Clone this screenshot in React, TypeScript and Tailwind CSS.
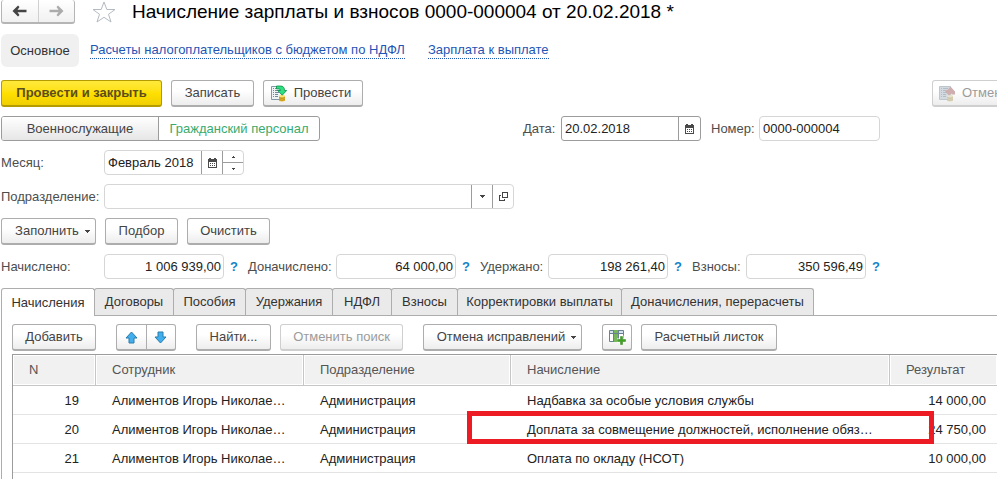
import { useState } from "react";
import type { ReactNode } from "react";
import clsx from "clsx";

const totals = [
  { id: "accrued", label: "Начислено:", value: "1 006 939,00", labelClass: "w-[103px]" },
  { id: "extra", label: "Доначислено:", value: "64 000,00", labelClass: "w-[88px]" },
  { id: "withheld", label: "Удержано:", value: "198 261,40", labelClass: "w-[68px]" },
  { id: "fees", label: "Взносы:", value: "350 596,49", labelClass: "w-[54px]" },
];

const tabs = [
  { label: "Начисления", width: "w-[94px]" },
  { label: "Договоры", width: "w-[80px]" },
  { label: "Пособия", width: "w-[73px]" },
  { label: "Удержания", width: "w-[88px]" },
  { label: "НДФЛ", width: "w-[60px]" },
  { label: "Взносы", width: "w-[67px]" },
  { label: "Корректировки выплаты", width: "w-[165px]" },
  { label: "Доначисления, перерасчеты", width: "w-[193px]" },
];

const rows = [
  { n: 19, employee: "Алиментов Игорь Николае…", dept: "Администрация", accrual: "Надбавка за особые условия службы", result: "14 000,00" },
  { n: 20, employee: "Алиментов Игорь Николае…", dept: "Администрация", accrual: "Доплата за совмещение должностей, исполнение обяз…", result: "24 750,00", marked: true },
  { n: 21, employee: "Алиментов Игорь Николае…", dept: "Администрация", accrual: "Оплата по окладу (НСОТ)", result: "10 000,00" },
];

type ButtonProps = {
  children: ReactNode;
  className?: string;
  primary?: boolean;
  disabled?: boolean;
  label?: string;
};

function Button({ children, className, primary, disabled, label }: ButtonProps) {
  return (
    <button
      type="button"
      disabled={disabled}
      aria-label={label}
      className={clsx(
        "flex h-[27px] shrink-0 items-center justify-center whitespace-nowrap rounded-[3px] border border-b-2",
        primary
          ? "border-[#b39b00] bg-linear-to-b from-[#ffea3a] via-[#ffe000] to-[#f0cf00] font-bold text-[#5c4d1c]"
          : "bg-linear-to-b from-white from-40% to-[#ededed]",
        !primary && (disabled ? "border-[#cfcfcf] text-[#9b9b9b]" : "border-[#adadad] text-[#444]"),
        className
      )}
    >
      {children}
    </button>
  );
}

function NavArrow({ flip }: { flip?: boolean }) {
  return (
    <svg width="15" height="12" viewBox="0 0 15 12" className={flip ? "-scale-x-100 text-[#ababab]" : "text-[#444]"}>
      <path d="M0.500 6L6 0.500L7.500 2L5.500 4.700H14.500V7.300H5.500L7.500 10L6 11.500Z" fill="currentColor" />
    </svg>
  );
}

function CalendarIcon() {
  return (
    <svg width="9" height="10" viewBox="0 0 9 10" shapeRendering="crispEdges">
      <path d="M1 0h2v1h3V0h2v1h1v9H0V1h1z" fill="#4a4a4a" />
      <path d="M1 4h7v5H1z" fill="#fff" />
      <path d="M2 5h1v1H2zM4 5h1v1H4zM6 5h1v1H6zM2 7h1v1H2zM4 7h1v1H4zM6 7h1v1H6z" fill="#4a4a4a" />
    </svg>
  );
}

function Caret() {
  return (
    <svg width="5" height="3" viewBox="0 0 5 3" shapeRendering="crispEdges">
      <path d="M0 0h5v1H4v1H3v1H2V2H1V1H0z" fill="#444" />
    </svg>
  );
}

// Document sheet with an arrow above a stack of coins
function PostIcon({ muted }: { muted?: boolean }) {
  return (
    <svg width="16" height="17" viewBox="0 0 16 17">
      <path d="M0.500 1.500H11.500V14.500H0.500Z" fill={muted ? "#d3dbe1" : "#eef3f6"} stroke={muted ? "#bcc6cc" : "#8298a6"} />
      <path d="M2 3.500H3M4 3.500H9M2 5.500H3M4 5.500H9M2 7.500H3M4 7.500H8M2 9.500H3M4 9.500H7M2 11.500H3M4 11.500H7" stroke={muted ? "#b3bdc4" : "#71899a"} />
      <path d="M8 11V15.500C8 16.700 14 16.700 14 15.500V11Z" fill={muted ? "#dcd5b8" : "#e6b92e"} />
      <ellipse cx="11" cy="11" rx="3" ry="1.200" fill={muted ? "#e7e2cc" : "#ffe37a"} />
      <path d="M8 12.700Q11 14.200 14 12.700M8 14.500Q11 16 14 14.500" fill="none" stroke={muted ? "#c8c1a4" : "#b48618"} strokeWidth="0.800" />
      {muted ? (
        <path d="M11.500 1.500L16 6.500V9.500H12.500V8.500L10 10.500L6.500 7V5H8.500Z" fill="#cfaeb0" />
      ) : (
        <path d="M5.500 1H9.500Q13.500 1 13.500 5.500H15.700L11.200 10.200L6.700 5.500H9.500Q9.500 3.900 8 3.900H5.500Z" fill="#2fe083" stroke="#0d8e48" strokeWidth="0.800" />
      )}
    </svg>
  );
}

function BlueArrow({ down }: { down?: boolean }) {
  return (
    <svg width="13" height="13" viewBox="0 0 13 13" className={down ? "rotate-180" : undefined}>
      <path d="M6.500 1L12 7H9V12H4V7H1Z" fill="#41aeee" stroke="#2b7cab" strokeLinejoin="round" />
    </svg>
  );
}

function AddColumnIcon() {
  return (
    <svg width="17" height="15" viewBox="0 0 17 15">
      <path d="M0.500 0.500H14.500V11.500H0.500Z" fill="#fff" stroke="#6a8192" />
      <path d="M1 1H14V3H1Z" fill="#d7e3ec" />
      <path d="M5 0H9V12H5Z" fill="#76b75c" />
      <path d="M0 3.500H15M4.500 0V12M9.500 0V12" stroke="#6a8192" />
      <path d="M10.500 5.500H14.500V8.500H17V12.500H14.500V15H10.500V12.500H8V8.500H10.500Z" fill="#fff" />
      <path d="M11.500 6.500H13.500V9.500H16.500V11.500H13.500V14.500H11.500V11.500H8.500V9.500H11.500Z" fill="#3fa321" stroke="#2b8112" strokeWidth="0.500" />
    </svg>
  );
}

function OpenIcon() {
  return (
    <svg width="9" height="9" viewBox="0 0 9 9" fill="none" stroke="#444" shapeRendering="crispEdges">
      <path d="M3.500 0.500H8.500V5.500H3.500Z" />
      <path d="M2 3.500H0.500V8.500H5.500V7" />
    </svg>
  );
}

export default function App() {
  const [tab, setTab] = useState("Начисления");

  return (
    <div className="flex min-h-screen flex-col overflow-hidden bg-white pl-px font-['Liberation_Sans',Arial,sans-serif] text-[13px] leading-4 text-[#4d4d4d]">
      <header className="flex h-6 items-center">
        <div className="flex h-6 w-[74px] shrink-0 rounded-[3px] border border-t-0 border-b-2 border-[#b5b5b5] bg-linear-to-b from-white to-[#f1f1f1]">
          <button type="button" aria-label="Назад" className="flex flex-1 items-center justify-center border-r border-[#d0d0d0]">
            <NavArrow />
          </button>
          <button type="button" aria-label="Вперед" className="flex flex-1 items-center justify-center">
            <NavArrow flip />
          </button>
        </div>
        <button type="button" aria-label="В избранное" className="ml-4 shrink-0">
          <svg width="26" height="24" viewBox="0 0 26 24" fill="#fff" stroke="#b4bac1">
            <path d="M13 2L15.800 9.500H24L17.500 14.300L20 22L13 17.300L6 22L8.500 14.300L2 9.500H10.200Z" />
          </svg>
        </button>
        <h1 className="ml-[15px] whitespace-nowrap text-[19px] leading-6 text-black">
          Начисление зарплаты и взносов 0000-000004 от 20.02.2018 *
        </h1>
      </header>

      <nav className="mt-[10px] flex h-[33px] items-center whitespace-nowrap">
        <span className="flex h-full w-[78px] items-center justify-center rounded-md bg-[#f0f0f0] text-[#333]">Основное</span>
        <a href="#ndfl" className="ml-[11px] border-b border-dotted border-[#1f55b5] text-[#1f55b5]">
          Расчеты налогоплательщиков с бюджетом по НДФЛ
        </a>
        <a href="#payment" className="ml-[23px] border-b border-dotted border-[#1f55b5] text-[#1f55b5]">
          Зарплата к выплате
        </a>
      </nav>

      <main className="mt-[13px] flex flex-1 flex-col gap-[9px]">
        <div className="flex gap-[9px]">
          <Button primary className="w-[161px]">Провести и закрыть</Button>
          <Button className="w-[83px]">Записать</Button>
          <Button className="w-[100px] gap-[7px] pr-1">
            <PostIcon />
            Провести
          </Button>
          <div className="ml-auto w-[65px] shrink-0 overflow-hidden">
            <Button disabled className="w-max gap-[7px] px-[6px]">
              <PostIcon muted />
              Отмена проведения
            </Button>
          </div>
        </div>

        <div className="flex h-[25px] items-center">
          <div className="flex h-full w-[319px] rounded-[3px] border border-[#9c9c9c]">
            <button type="button" aria-pressed="false" className="w-[157px] rounded-l-[2px] border-r border-[#9c9c9c] bg-linear-to-b from-white to-[#e6e6e6] text-[#444]">
              Военнослужащие
            </button>
            <button type="button" aria-pressed="true" className="flex-1 text-[#38ab6e]">
              Гражданский персонал
            </button>
          </div>
          <label htmlFor="date" className="ml-auto w-[38px]">Дата:</label>
          <div className="flex h-full w-[140px] rounded-[3px] border border-[#9c9c9c]">
            <input id="date" defaultValue="20.02.2018" className="min-w-0 flex-1 px-[3px] text-[#222] outline-none" />
            <button type="button" aria-label="Выбрать дату" className="flex w-[22px] items-center justify-center border-l border-[#9c9c9c]">
              <CalendarIcon />
            </button>
          </div>
          <label htmlFor="number" className="ml-[10px] w-12">Номер:</label>
          <input id="number" defaultValue="0000-000004" className="mr-[117px] h-full w-[121px] rounded-[4px] border border-[#d6d6d6] px-[3px] text-[#222] outline-none" />
        </div>

        <div className="flex h-[25px] items-center">
          <label htmlFor="month" className="w-[103px]">Месяц:</label>
          <div className="flex h-full w-[140px] rounded-[4px] border border-[#d6d6d6]">
            <input id="month" defaultValue="Февраль 2018" className="min-w-0 flex-1 px-[3px] text-[#222] outline-none" />
            <button type="button" aria-label="Выбрать месяц" className="flex w-[22px] items-center justify-center border-x border-[#9c9c9c]">
              <CalendarIcon />
            </button>
            <div className="flex w-5 flex-col">
              <button type="button" aria-label="Следующий месяц" className="flex flex-1 items-center justify-center border-b border-[#9c9c9c]">
                <svg width="3" height="2" viewBox="0 0 3 2" shapeRendering="crispEdges">
                  <path d="M1 0h1v1h1v1H0V1h1z" fill="#444" />
                </svg>
              </button>
              <button type="button" aria-label="Предыдущий месяц" className="flex flex-1 items-center justify-center">
                <svg width="3" height="2" viewBox="0 0 3 2" shapeRendering="crispEdges">
                  <path d="M0 0h3v1H2v1H1V1H0z" fill="#444" />
                </svg>
              </button>
            </div>
          </div>
        </div>

        <div className="flex h-[25px] items-center">
          <label htmlFor="dept" className="w-[103px]">Подразделение:</label>
          <div className="flex h-full w-[410px] rounded-[4px] border border-[#d6d6d6]">
            <input id="dept" className="min-w-0 flex-1 px-[3px] outline-none" />
            <button type="button" aria-label="Выбрать из списка" className="flex w-[21px] items-center justify-center border-l border-[#9c9c9c]">
              <Caret />
            </button>
            <button type="button" aria-label="Открыть" className="flex w-[21px] items-center justify-center border-l border-[#9c9c9c]">
              <OpenIcon />
            </button>
          </div>
        </div>

        <div className="flex gap-[9px]">
          <Button className="w-[95px] gap-[6px] pl-2">
            Заполнить
            <Caret />
          </Button>
          <Button className="w-[73px]">Подбор</Button>
          <Button className="w-[83px]">Очистить</Button>
        </div>

        <div className="flex h-[25px] items-center">
          {totals.map((t) => (
            <div key={t.id} className="flex h-full shrink-0 items-center">
              <label htmlFor={t.id} className={t.labelClass}>{t.label}</label>
              <input
                id={t.id}
                readOnly
                defaultValue={t.value}
                className="h-full w-[120px] rounded-[4px] border border-[#d6d6d6] px-[2px] text-right text-[#222] outline-none"
              />
              <button type="button" aria-label="Подробнее" className="w-6 pl-[6px] text-left text-[13px] font-bold text-[#1583c9]">?</button>
            </div>
          ))}
        </div>

        <section className="flex flex-1 flex-col">
          <div role="tablist" className="flex h-7 border-b border-[#adadad]">
            {tabs.map((t, i) => (
              <button
                key={t.label}
                type="button"
                role="tab"
                aria-selected={tab === t.label}
                onClick={() => setTab(t.label)}
                className={clsx(
                  "shrink-0 whitespace-nowrap rounded-t-[3px] border border-b-0 border-[#adadad] text-[#333]",
                  t.width,
                  i > 0 && "-ml-px",
                  tab === t.label ? "h-7 bg-white" : "h-[27px] bg-[#eaeaea]"
                )}
              >
                {t.label}
              </button>
            ))}
          </div>

          <div className="flex flex-1 flex-col border-l border-[#adadad] pt-2 pl-[10px]">
            <div className="flex">
              <Button className="w-[84px]">Добавить</Button>
              <div className="ml-5 flex h-[27px] w-[60px] shrink-0 rounded-[3px] border border-b-2 border-[#adadad] bg-linear-to-b from-white from-40% to-[#ededed]">
                <button type="button" aria-label="Переместить вверх" className="flex flex-1 items-center justify-center border-r border-[#adadad]">
                  <BlueArrow />
                </button>
                <button type="button" aria-label="Переместить вниз" className="flex flex-1 items-center justify-center">
                  <BlueArrow down />
                </button>
              </div>
              <Button className="ml-5 w-[75px]">Найти...</Button>
              <Button disabled className="ml-[9px] w-[123px]">Отменить поиск</Button>
              <Button className="ml-5 w-[159px] gap-[6px] pl-2">
                Отмена исправлений
                <Caret />
              </Button>
              <Button label="Добавить колонку" className="ml-5 w-[30px]">
                <AddColumnIcon />
              </Button>
              <Button className="ml-[9px] w-[136px]">Расчетный листок</Button>
            </div>

            <div className="mt-[3px] flex-1 border-t border-l border-[#9c9c9c]">
              <table className="w-full table-fixed border-separate border-spacing-0 text-left text-[#222]">
                <colgroup>
                  <col className="w-[83px]" />
                  <col className="w-[208px]" />
                  <col className="w-[207px]" />
                  <col className="w-[379px]" />
                  <col />
                </colgroup>
                <thead>
                  <tr className="h-[31px] text-[#555]">
                    {["N", "Сотрудник", "Подразделение", "Начисление", "Результат"].map((h) => (
                      <th
                        key={h}
                        className="border-r border-b border-[#c6c6c6] bg-[#f1f1f1] px-4 font-normal shadow-[inset_0_0_0_1px_#fff] last:border-r-0"
                      >
                        {h}
                      </th>
                    ))}
                  </tr>
                </thead>
                <tbody>
                  {rows.map((r) => (
                    <tr key={r.n} className="h-[29px] whitespace-nowrap [&>td]:border-b [&>td]:border-[#e3e3e3] [&>td]:pt-[2px]">
                      <td className="pr-[17px] text-right">{r.n}</td>
                      <td className="pl-4">{r.employee}</td>
                      <td className="pl-4">{r.dept}</td>
                      <td className="relative pl-4">
                        {r.marked && (
                          <span className="pointer-events-none absolute -inset-x-11 -top-1 -bottom-px z-10 border-[5px] border-[#ed1c24]" />
                        )}
                        {r.accrual}
                      </td>
                      <td className="pr-[11px] text-right">{r.result}</td>
                    </tr>
                  ))}
                </tbody>
              </table>
            </div>
          </div>
        </section>
      </main>
    </div>
  );
}
